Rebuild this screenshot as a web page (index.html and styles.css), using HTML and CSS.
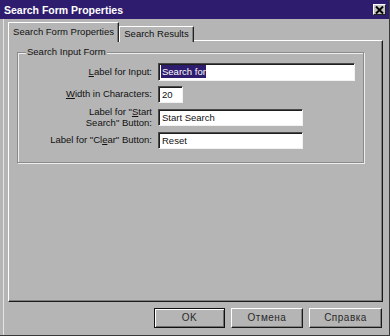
FILE: index.html
```
<!DOCTYPE html>
<html lang="en">
<head>
    <meta charset="UTF-8">
    <meta name="viewport" content="width=device-width, initial-scale=1.0">
    <title>Search Form Properties</title>
    <link rel="stylesheet" href="styles.css">
</head>
<body>
    <div class="window">
        <div class="titlebar">
            <span class="title">Search Form Properties</span>
            <span class="close">
                <svg width="9" height="8" viewBox="0 0 9 8"><path d="M1 0.5 L8 7.5 M8 0.5 L1 7.5" stroke="#000" stroke-width="2"/></svg>
            </span>
        </div>
        <div class="client">
            <div class="tabs">
                <div class="tab active">Search Form Properties</div>
                <div class="tab">Search Results</div>
            </div>
            <div class="panel">
                <fieldset class="group">
                    <legend>Search Input Form</legend>
                    <div class="row row-1">
                        <div class="lbl"><u>L</u>abel for Input:</div>
                        <div class="field field-wide"><span class="sel">Search for</span></div>
                    </div>
                    <div class="row row-2">
                        <div class="lbl"><u>W</u>idth in Characters:</div>
                        <div class="field field-num">20</div>
                    </div>
                    <div class="row row-3">
                        <div class="lbl">Label for "<u>S</u>tart<br>Search" Button:</div>
                        <div class="field field-mid">Start Search</div>
                    </div>
                    <div class="row row-4">
                        <div class="lbl">Label for "Cl<u>e</u>ar" Button:</div>
                        <div class="field field-mid">Reset</div>
                    </div>
                </fieldset>
            </div>
            <div class="buttons">
                <div class="btn btn-default">OK</div>
                <div class="btn">Отмена</div>
                <div class="btn btn-help">Справка</div>
            </div>
        </div>
    </div>
</body>
</html>
```
FILE: styles.css
```
body {
    margin: 0;
    background-color: #b5b5b5;
    font-family: "Liberation Sans", Arial, sans-serif;
    font-size: 9.5px;
    color: #111;
}
.window {
    width: 390px;
    height: 336px;
    box-sizing: border-box;
    background-color: #b5b5b5;
    border-right: 1px solid #3a3a3a;
    border-bottom: 1px solid #3a3a3a;
    box-shadow: inset 3px 0 0 #b5b5b5, inset 4px 0 0 #e4e4e4;
}
.titlebar {
    height: 19px;
    background-color: #2e1c6e;
    color: white;
    display: flex;
    align-items: center;
    justify-content: space-between;
    padding: 0 3px 0 4px;
}
.title {
    font-weight: bold;
    font-size: 10.5px;
}
.close {
    width: 13px;
    height: 11px;
    box-sizing: border-box;
    background-color: #c4c4c4;
    border: 1px solid;
    border-color: #fff #222 #222 #fff;
    display: flex;
    align-items: center;
    justify-content: center;
}
.client {
    padding: 3px 6px 0 8px;
}
.tabs {
    display: flex;
    align-items: flex-end;
    margin-bottom: -2px;
}
.tab {
    height: 16px;
    box-sizing: border-box;
    width: 75px;
    text-align: center;
    line-height: 14px;
    border-top: 1px solid #fff;
    border-left: 1px solid #fff;
    border-right: 1px solid #222;
    box-shadow: inset -1px 0 0 #808080;
    background-color: #b5b5b5;
}
.tab.active {
    position: relative;
    z-index: 1;
    width: 111px;
    height: 20px;
    line-height: 17px;
}
.panel {
    height: 262px;
    box-sizing: border-box;
    border: 1px solid;
    border-color: #fff #1a1a1a #1a1a1a #fff;
    box-shadow: inset -1px -1px 0 #808080;
    padding: 5px 0 0 8px;
}
.group {
    margin: 0;
    width: 347px;
    height: 117px;
    box-sizing: border-box;
    border: 1px solid #8a8a8a;
    box-shadow: 1px 1px 0 #eee, inset 1px 1px 0 #eee;
    padding: 5px 0 0 1px;
}
.group legend {
    padding: 0 1px;
    margin-left: 7px;
    line-height: 12px;
    background-color: #b5b5b5;
}
.row {
    display: flex;
    align-items: center;
}
.row-1 {
    height: 18px;
    margin-bottom: 5px;
}
.row-2 {
    height: 17px;
    margin-bottom: 4px;
}
.row-3 {
    height: 21px;
    margin-bottom: 4px;
}
.row-4 {
    height: 17px;
}
.lbl {
    width: 133px;
    padding-right: 3px;
    text-align: right;
    line-height: 10.5px;
    flex-shrink: 0;
}
.field {
    height: 17px;
    box-sizing: border-box;
    margin-left: 3px;
    background-color: #fff;
    border: 1px solid;
    border-color: #4a4a4a #f2f2f2 #f2f2f2 #4a4a4a;
    box-shadow: inset 1px 1px 0 #1e1e1e;
    padding: 2px 0 0 3px;
    line-height: 12px;
    white-space: nowrap;
}
.field-wide {
    width: 197px;
    height: 18px;
    padding-top: 2px;
}
.field-num {
    width: 25px;
}
.field-mid {
    width: 145px;
}
.sel {
    background-color: #2e1c6e;
    color: #fff;
    padding: 1px 0 1px 1px;
    margin-left: -1px;
}
.buttons {
    display: flex;
    justify-content: flex-end;
    gap: 6px;
    margin-top: 6px;
    padding-right: 1px;
}
.btn {
    width: 72px;
    height: 20px;
    box-sizing: border-box;
    border: 1px solid;
    border-color: #fff #1a1a1a #1a1a1a #fff;
    box-shadow: inset -1px -1px 0 #808080;
    text-align: center;
    line-height: 17px;
    font-size: 10px;
    letter-spacing: 0.5px;
    color: #2a2a2a;
}
.btn-default {
    width: 71px;
    border: 1px solid #111;
    box-shadow: inset 1px 1px 0 #fff, inset -1px -1px 0 #6e6e6e;
}
.btn-help {
    width: 73px;
}
```
